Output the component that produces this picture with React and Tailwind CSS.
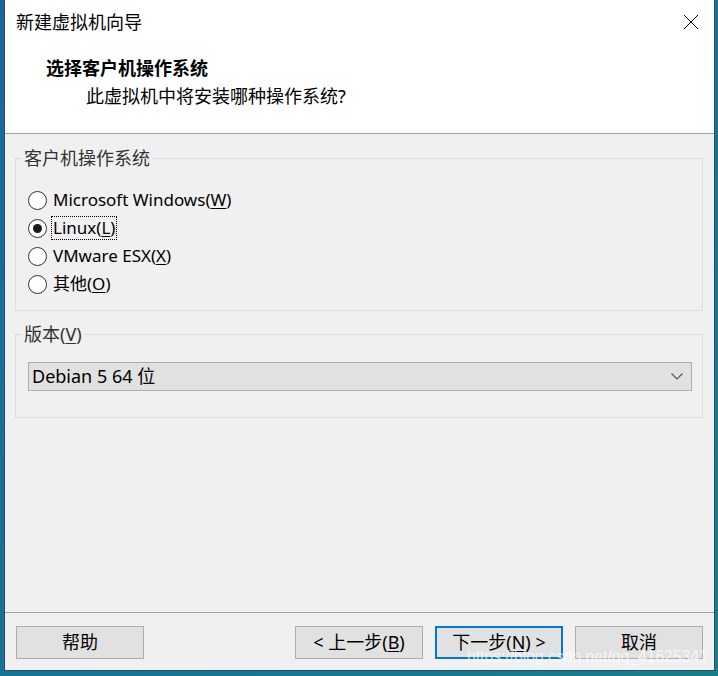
import React from "react";

const font = { fontFamily: '"Noto Sans", "Noto Sans CJK SC", sans-serif' };

const Radio = ({ checked, label, hotkey, focused }) => (
  <div className="flex items-center h-[28px]">
    <span className="w-[19px] h-[19px] rounded-full border border-[#333333] bg-white flex items-center justify-center">
      {checked && <span className="w-[9px] h-[9px] rounded-full bg-[#1a1a1a]" />}
    </span>
    <span
      className={
        "ml-[5px] px-[1px] leading-[22px] text-[17px] " +
        (focused ? "outline outline-1 outline-dotted outline-black" : "")
      }
    >
      {label}(<span className="underline underline-offset-2">{hotkey}</span>)
    </span>
  </div>
);

const Button = ({ children, primary }) => (
  <button
    className={
      "w-[128px] h-[33px] bg-[#e1e1e1] text-[18px] text-black flex items-center justify-center " +
      (primary ? "border-2 border-[#0078d7]" : "border border-[#adadad]")
    }
  >
    {children}
  </button>
);

export default function App() {
  return (
    <div
      className="w-[718px] h-[676px] bg-gradient-to-br from-[#1b66a0] to-[#177f8a] pl-[4px] text-[18px] text-black"
      style={font}
    >
      <div className="w-[711px] h-[671px] flex flex-col bg-[#f0f0f0] border-l border-r border-b border-[#2a4a66] overflow-hidden">
        {/* Header */}
        <div className="h-[134px] bg-white border-b border-[#a0a0a0] pt-[10px] pl-[11px] pr-[15px]">
          <div className="flex items-center justify-between h-[24px]">
            <span className="leading-[24px]">新建虚拟机向导</span>
            <svg width="16" height="16" viewBox="0 0 16 16">
              <path d="M1 1 L15 15 M15 1 L1 15" stroke="#000" strokeWidth="1" />
            </svg>
          </div>
          <div className="mt-[22px] pl-[30px] font-bold leading-[24px]">选择客户机操作系统</div>
          <div className="mt-[4px] pl-[70px] leading-[24px]">此虚拟机中将安装哪种操作系统?</div>
        </div>

        {/* Body */}
        <div className="flex-1 pt-[12px]">
          <fieldset className="ml-[10px] w-[688px] h-[165px] border border-[#dcdcdc]">
            <legend className="ml-[6px] px-[2px] leading-[24px] text-[#333]">客户机操作系统</legend>
            <div className="pl-[12px] pt-[16px]">
              <Radio label="Microsoft Windows" hotkey="W" />
              <Radio label="Linux" hotkey="L" checked focused />
              <Radio label="VMware ESX" hotkey="X" />
              <Radio label="其他" hotkey="O" />
            </div>
          </fieldset>

          <fieldset className="mt-[11px] ml-[10px] w-[688px] h-[96px] border border-[#dcdcdc]">
            <legend className="ml-[6px] px-[2px] leading-[24px] text-[#333]">
              版本(<span className="underline underline-offset-2">V</span>)
            </legend>
            <div className="pl-[12px] pr-[10px] pt-[16px]">
              <div className="h-[29px] bg-[#e1e1e1] border border-[#adadad] flex items-center justify-between pl-[3px] pr-[8px]">
                <span>Debian 5 64 位</span>
                <svg width="12" height="7" viewBox="0 0 12 7">
                  <path d="M0.5 0.5 L6 6 L11.5 0.5" fill="none" stroke="#555" strokeWidth="1.2" />
                </svg>
              </div>
            </div>
          </fieldset>
        </div>

        {/* Footer */}
        <div className="relative h-[58px] border-t border-[#a0a0a0] pt-[13px] px-[11px] flex items-start">
          <Button>帮助</Button>
          <div className="ml-auto flex gap-[12px]">
            <Button>
              &lt; 上一步(<span className="underline underline-offset-2">B</span>)
            </Button>
            <Button primary>
              下一步(<span className="underline underline-offset-2">N</span>) &gt;
            </Button>
            <Button>取消</Button>
          </div>
          <span
            className="absolute left-[462px] top-[34px] text-[15.7px] leading-[20px] whitespace-nowrap text-white/70 pointer-events-none"
            style={{ fontFamily: '"Liberation Sans", sans-serif' }}
          >
            https://blog.csdn.net/qq_41625341
          </span>
        </div>
      </div>
    </div>
  );
}
